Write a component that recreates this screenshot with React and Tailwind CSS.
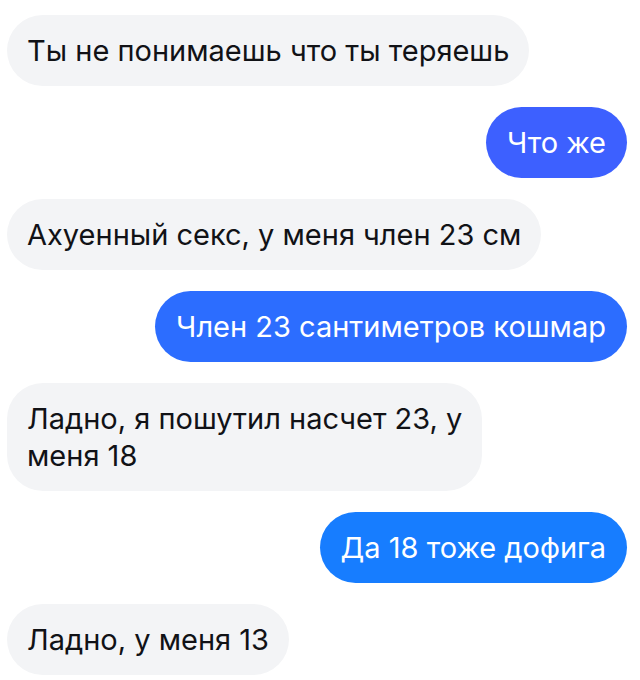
import React from 'react';
import { clsx } from 'clsx';

const messages = [
  { id: 1, text: 'Ты не понимаешь что ты теряешь' },
  { id: 2, text: 'Что же', mine: true, color: 'bg-[#3d60ff]' },
  { id: 3, text: 'Ахуенный секс, у меня член 23 см' },
  { id: 4, text: 'Член 23 сантиметров кошмар', mine: true, color: 'bg-[#2c6dff]' },
  { id: 5, text: 'Ладно, я пошутил насчет 23, у\nменя 18' },
  { id: 6, text: 'Да 18 тоже дофига', mine: true, color: 'bg-[#177dff]' },
  { id: 7, text: 'Ладно, у меня 13' },
];

function Message({ text, mine, color }) {
  return (
    <li className={clsx('flex', mine ? 'justify-end pl-20' : 'justify-start pr-20')}>
      <p
        className={clsx(
          'rounded-[36px] py-[17px] text-[29px] leading-[37px] whitespace-pre-line',
          mine ? ['px-[21px] text-white', color] : 'bg-[#f3f4f6] px-5 text-[#111216]'
        )}
      >
        {text}
      </p>
    </li>
  );
}

export default function App() {
  return (
    <main className="min-h-screen bg-white font-['Inter',sans-serif]">
      <ul className="flex flex-col gap-[21px] pt-[15px] pr-[13px] pb-1 pl-[7px]">
        {messages.map((message) => (
          <Message key={message.id} {...message} />
        ))}
      </ul>
    </main>
  );
}
